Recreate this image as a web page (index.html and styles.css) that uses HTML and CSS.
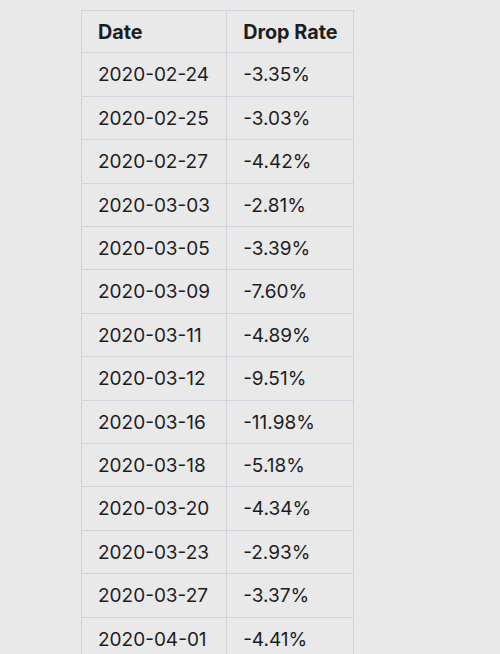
FILE: index.html
```html
<!DOCTYPE html>
<html>
<head>
<meta charset="utf-8">
<link rel="stylesheet" href="styles.css">
</head>
<body>
<table class="rates">
<thead>
<tr><th>Date</th><th>Drop Rate</th></tr>
</thead>
<tbody>
<tr><td>2020-02-24</td><td>-3.35%</td></tr>
<tr><td>2020-02-25</td><td>-3.03%</td></tr>
<tr><td>2020-02-27</td><td>-4.42%</td></tr>
<tr><td>2020-03-03</td><td>-2.81%</td></tr>
<tr><td>2020-03-05</td><td>-3.39%</td></tr>
<tr><td>2020-03-09</td><td>-7.60%</td></tr>
<tr><td>2020-03-11</td><td>-4.89%</td></tr>
<tr><td>2020-03-12</td><td>-9.51%</td></tr>
<tr><td>2020-03-16</td><td>-11.98%</td></tr>
<tr><td>2020-03-18</td><td>-5.18%</td></tr>
<tr><td>2020-03-20</td><td>-4.34%</td></tr>
<tr><td>2020-03-23</td><td>-2.93%</td></tr>
<tr><td>2020-03-27</td><td>-3.37%</td></tr>
<tr><td>2020-04-01</td><td>-4.41%</td></tr>
</tbody>
</table>
</body>
</html>
```
FILE: styles.css
```css
html, body {
  margin: 0;
  background: #e9e9e9;
}
body {
  padding: 10px 0 0 81px;
  font-family: Inter, "Noto Sans", sans-serif;
  color: #1d1d1f;
}
.rates {
  border-collapse: collapse;
  font-size: 19px;
}
.rates th,
.rates td {
  border: 1px solid #d2d2de;
  padding: 8px 16px;
  line-height: 26.4px;
  text-align: left;
  white-space: nowrap;
}
.rates td {
  padding-top: 9px;
  padding-bottom: 7px;
}
.rates th {
  font-size: 19.8px;
  font-weight: 700;
  padding-top: 8px;
  padding-bottom: 7px;
}
```
